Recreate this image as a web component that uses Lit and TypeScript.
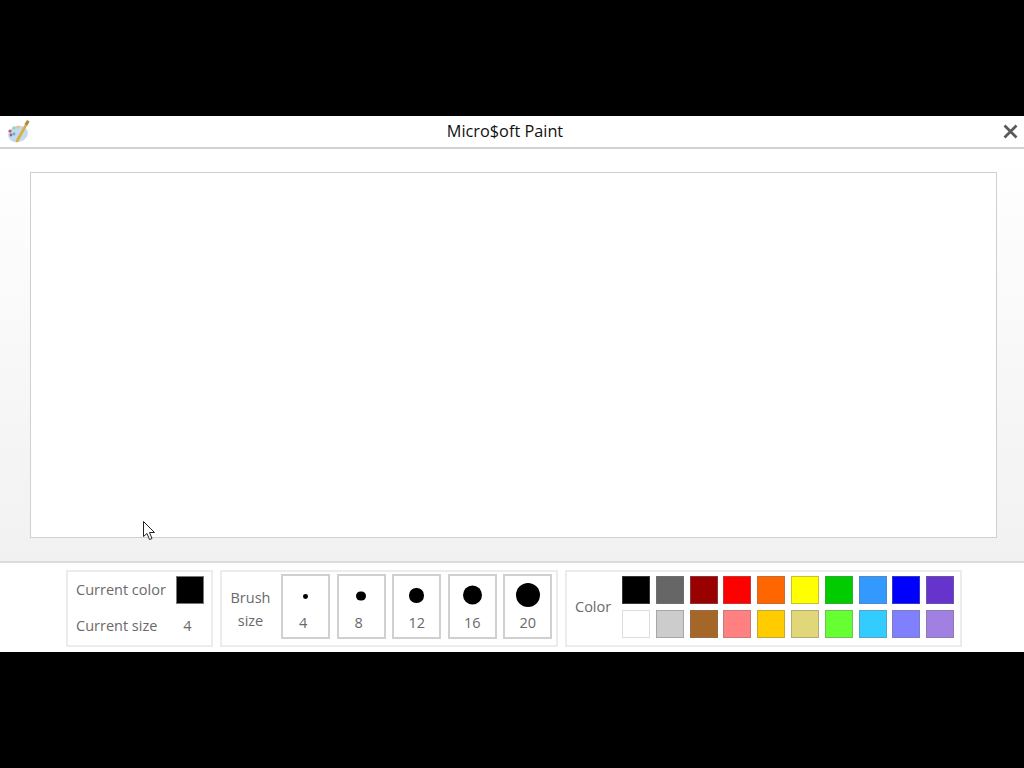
import { LitElement, html, css, svg } from "lit";
import { customElement } from "lit/decorators.js";

const COLORS = [
  "#000000", "#666666", "#990000", "#ff0000", "#ff6600", "#ffff00", "#00cc00", "#3399ff", "#0000ff", "#6633cc",
  "#ffffff", "#cccccc", "#a66628", "#ff8080", "#ffcc00", "#e0d878", "#66ff33", "#33ccff", "#8080ff", "#a080e0",
];
const SIZES = [4, 8, 12, 16, 20];

@customElement("app-root")
export class AppRoot extends LitElement {
  static styles = css`
    :host {
      display: block;
      position: relative;
      width: 1024px;
      height: 768px;
      background: #000;
      font-family: "Open Sans", "Noto Sans", sans-serif;
      overflow: hidden;
    }
    .window {
      position: absolute;
      left: 0;
      right: 0;
      top: 116px;
      height: 536px;
      display: flex;
      flex-direction: column;
      background: #fff;
    }
    .titlebar {
      height: 29px;
      flex: none;
      border-bottom: 2px solid #d2d2d2;
      display: flex;
      align-items: center;
      justify-content: center;
      position: relative;
      box-sizing: content-box;
      font-size: 16.3px;
      color: #111;
      padding: 0 14px 2px 0;
    }
    .app-icon {
      position: absolute;
      left: 7px;
      top: 3px;
    }
    .close {
      position: absolute;
      left: 1003px;
      top: 8px;
    }
    .main {
      flex: 1;
      background: linear-gradient(to bottom, #ffffff 0%, #f1f1f1 100%);
      padding: 23px 27px 23px 30px;
      display: flex;
    }
    .canvas {
      flex: 1;
      background: #fff;
      border: 1px solid #cfcfcf;
      box-sizing: border-box;
    }
    .toolbar {
      height: 91px;
      flex: none;
      border-top: 2px solid #dcdcdc;
      box-sizing: border-box;
      padding: 7px 0 0 66px;
      display: flex;
      gap: 7px;
      align-items: flex-start;
      background: #fff;
      color: #6a6a6a;
      font-size: 14.5px;
    }
    .group {
      height: 77px;
      border: 2px solid #ececec;
      box-sizing: border-box;
      display: flex;
      align-items: center;
    }
    .current {
      width: 147px;
      display: grid;
      grid-template-columns: 100px 30px;
      grid-template-rows: 36px 36px;
      padding: 0 0 2px 8px;
      align-items: center;
      align-content: center;
    }
    .current .swatch {
      width: 28px;
      height: 28px;
      background: #000;
      border: 1px solid #777;
      box-sizing: border-box;
    }
    .current .val {
      text-align: center;
      padding-right: 7px;
    }
    .brush {
      width: 338px;
      padding-left: 8px;
      gap: 10px;
    }
    .brush .label {
      width: 41px;
      line-height: 23px;
      text-align: center;
    }
    .sizes {
      display: flex;
      gap: 6.6px;
      margin-top: -4px;
    }
    .size {
      width: 49px;
      height: 65px;
      box-sizing: border-box;
      border: 2px solid #d0d0d0;
      display: flex;
      flex-direction: column;
      align-items: center;
      font-size: 14.5px;
      line-height: 20px;
    }
    .size span {
      display: inline-block;
      min-width: 13px;
      margin-top: -4px;
    }
    .dot-box {
      height: 41px;
      flex: none;
      display: flex;
      align-items: center;
      justify-content: center;
    }
    .dot {
      background: #000;
      border-radius: 50%;
    }
    .palette {
      width: 397px;
      padding-left: 8px;
      gap: 7px;
    }
    .palette .label {
      width: 40px;
      margin-top: -5px;
    }
    .swatches {
      display: grid;
      grid-template-columns: repeat(10, 28px);
      grid-template-rows: 28px 28px;
      column-gap: 5.8px;
      row-gap: 6px;
      margin-top: -4px;
    }
    .swatches div {
      box-sizing: border-box;
      border: 1px solid rgba(120, 120, 120, 0.45);
    }
    .swatches .light {
      border-color: #dcdcdc;
    }
    .cursor {
      position: absolute;
      left: 143px;
      top: 521px;
    }
  `;

  private icon() {
    return svg`<svg class="app-icon" width="24" height="24" viewBox="0 0 24 24">
      <ellipse cx="11" cy="15" rx="10" ry="8" fill="#c3d9ef" transform="rotate(-20 11 15)"/>
      <circle cx="3" cy="12" r="1.6" fill="#c0507a"/>
      <circle cx="4" cy="16" r="1.4" fill="#a05a90"/>
      <circle cx="7" cy="9" r="1.8" fill="#9ad8b0"/>
      <circle cx="11" cy="8" r="1.6" fill="#ecc088"/>
      <circle cx="7" cy="15" r="1.4" fill="#68b0b0"/>
      <path d="M10 22 L19 6" stroke="#d8b040" stroke-width="2.6" stroke-linecap="round"/>
      <path d="M17.5 5 L20 1 L22.5 2.5 L20.5 6.5 Z" fill="#a88850"/>
    </svg>`;
  }

  render() {
    return html`
      <div class="window">
        <div class="titlebar">
          ${this.icon()}
          <span>Micro$oft Paint</span>
          <svg class="close" width="15" height="15" viewBox="0 0 15 15">
            <path d="M1.5 1.5 L13.5 13.5 M13.5 1.5 L1.5 13.5" stroke="#5a5a5a" stroke-width="2.8" fill="none"/>
          </svg>
        </div>
        <div class="main"><div class="canvas"></div></div>
        <div class="toolbar">
          <div class="group current">
            <span>Current color</span>
            <div class="swatch"></div>
            <span>Current size</span>
            <span class="val">4</span>
          </div>
          <div class="group brush">
            <div class="label">Brush<br />size</div>
            <div class="sizes">
              ${SIZES.map(
                (s) => html`<div class="size">
                  <div class="dot-box">
                    <div
                      class="dot"
                      style="width:${s * 1.2}px;height:${s * 1.2}px;transform:translateY(${-(s - 4) / 8}px)"
                    ></div>
                  </div>
                  <span>${s}</span>
                </div>`
              )}
            </div>
          </div>
          <div class="group palette">
            <div class="label">Color</div>
            <div class="swatches">
              ${COLORS.map(
                (c) => html`<div class=${c === "#ffffff" ? "light" : ""} style="background:${c}"></div>`
              )}
            </div>
          </div>
        </div>
      </div>
      <svg class="cursor" width="14" height="21" viewBox="0 0 14 21">
        <path d="M0.5 0.5 L0.5 15.5 L4 12.5 L6.5 18.5 L9 17.5 L6.5 11.5 L11.5 11.5 Z" fill="#fff" stroke="#222" stroke-width="1"/>
      </svg>
    `;
  }
}
